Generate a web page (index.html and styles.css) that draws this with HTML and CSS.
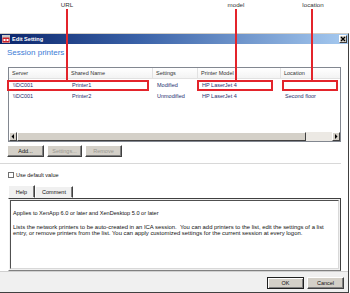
FILE: index.html
```html
<!DOCTYPE html>
<html>
<head>
<meta charset="utf-8">
<link rel="stylesheet" href="styles.css">
</head>
<body>
<div class="page">
  <div class="annot"></div>
  <div class="dialog">
    <div class="titlebar">
      <svg class="appicon" width="8" height="8" viewBox="0 0 8 8"><rect x="0" y="0" width="8" height="8" fill="#c8c8c8"/><rect x="0.5" y="2.5" width="7" height="5" fill="#d0202a"/><rect x="1.5" y="4" width="2" height="2" fill="#fff"/><rect x="4.5" y="4" width="2" height="2" fill="#fff"/></svg>
      <span class="title">Edit Setting</span>
      <span class="closebtn"><svg width="6" height="6" viewBox="0 0 6 6"><path d="M1 1 L5 5 M5 1 L1 5" stroke="#000" stroke-width="1.3"/></svg></span>
    </div>
    <div class="content">
      <div class="heading">Session printers</div>
      <div class="table">
        <div class="row head">
          <div class="cell">Server</div>
          <div class="cell">Shared Name</div>
          <div class="cell">Settings</div>
          <div class="cell">Printer Model</div>
          <div class="cell">Location</div>
        </div>
        <div class="row">
          <div class="cell">\\DC001</div>
          <div class="cell">Printer1</div>
          <div class="cell">Modified</div>
          <div class="cell">HP LaserJet 4</div>
          <div class="cell"></div>
        </div>
        <div class="row">
          <div class="cell">\\DC001</div>
          <div class="cell">Printer2</div>
          <div class="cell">Unmodified</div>
          <div class="cell">HP LaserJet 4</div>
          <div class="cell">Second floor</div>
        </div>
        <div class="filler"></div>
        <div class="hscroll">
          <div class="arrow"><svg width="4" height="5" viewBox="0 0 4 5"><path d="M3 0 L0.5 2.5 L3 5 Z" fill="#000"/></svg></div>
          <div class="thumb"></div>
          <div class="track"></div>
          <div class="arrow"><svg width="4" height="5" viewBox="0 0 4 5"><path d="M1 0 L3.5 2.5 L1 5 Z" fill="#000"/></svg></div>
        </div>
      </div>
      <div class="btnrow">
        <div class="btn">Add...</div>
        <div class="btn disabled">Settings...</div>
        <div class="btn disabled">Remove</div>
      </div>
    </div>
    <div class="sep"></div>
    <div class="lower">
      <div class="checkrow"><span class="checkbox"></span><span>Use default value</span></div>
      <div class="tabs">
        <div class="tab active">Help</div>
        <div class="tab">Comment</div>
      </div>
      <div class="panel">
        <div class="panelbox">
          <p class="applies">Applies to XenApp 6.0 or later and XenDesktop 5.0 or later</p>
          <p class="desc">Lists the network printers to be auto-created in an ICA session.&nbsp; You can add printers to the list, edit the settings of a list<br>entry, or remove printers from the list. You can apply customized settings for the current session at every logon.</p>
        </div>
      </div>
    </div>
    <div class="footer">
      <div class="btn wide default">OK</div>
      <div class="btn wide">Cancel</div>
    </div>
  </div>

  <div class="label l-url">URL</div>
  <div class="label l-model">model</div>
  <div class="label l-loc">location</div>
  <div class="vline v-url"></div>
  <div class="vline v-model"></div>
  <div class="vline v-loc"></div>
  <div class="rbox b-url"></div>
  <div class="rbox b-model"></div>
  <div class="rbox b-loc"></div>
</div>
</body>
</html>
```
FILE: styles.css
```css
* { box-sizing: border-box; }
html, body { margin: 0; padding: 0; background: #fff; }
body { width: 350px; height: 293px; overflow: hidden; font-family: "Liberation Sans", Arial, sans-serif; font-size: 5.5px; color: #111; }
.page { position: relative; width: 350px; height: 293px; }
.annot { height: 33px; }

.dialog { width: 349px; border-top: 1px solid #d4d0c8; border-right: 1px solid #404040; border-bottom: 1px solid #404040; background: #fff; display: flex; flex-direction: column; }

.titlebar { height: 10px; background: linear-gradient(to right, #0a246a 0%, #3a62a8 40%, #a6caf0 100%); display: flex; align-items: center; padding: 0 1px 0 2px; }
.appicon { display: block; margin-right: 2px; }
.title { color: #fff; font-weight: bold; font-size: 5.6px; flex: 1; }
.closebtn { width: 8px; height: 8px; background: #d4d0c8; border: 1px solid; border-color: #fff #404040 #404040 #fff; display: flex; align-items: center; justify-content: center; }
.closebtn svg { display: block; }

.content { padding: 0 7px 0 8px; }
.heading { margin-top: 4px; height: 10px; line-height: 10px; font-size: 8px; color: #3a7bd5; margin-left: -1px; }

.table { margin-top: 9px; width: 333px; height: 75px; border: 1px solid #828790; display: flex; flex-direction: column; background: #fff; }
.row { display: grid; grid-template-columns: 59px 85px 45px 83px 1fr; height: 11px; align-items: center; color: #1e2d6e; }
.row .cell { padding-left: 4px; white-space: nowrap; overflow: hidden; }
.row.head { height: 11px; color: #333; background: linear-gradient(#fff, #f3f3f3); border-bottom: 1px solid #e2e2e2; }
.row.head .cell { height: 100%; display: flex; align-items: center; border-right: 1px solid #e2e2e2; padding-left: 3px; }
.row.head .cell:last-child { border-right: none; }
.filler { flex: 1; }
.hscroll { height: 9px; display: flex; background: #ece9e4; }
.hscroll .arrow { width: 8px; height: 9px; background: #d4d0c8; border: 1px solid; border-color: #fff #404040 #404040 #fff; display: flex; align-items: center; justify-content: center; }
.hscroll .arrow svg { display: block; }
.hscroll .thumb { width: 289px; background: #d4d0c8; border: 1px solid; border-color: #fff #404040 #404040 #fff; }
.hscroll .track { flex: 1; }

.btnrow { display: flex; gap: 3px; margin-top: 3px; height: 12px; margin-left: -1px; }
.btn { height: 12px; width: 37px; background: #d4d0c8; border: 1px solid; border-color: #fff #404040 #404040 #fff; box-shadow: inset -1px -1px 0 #808080; display: flex; align-items: center; justify-content: center; color: #111; }
.btn.disabled { color: #9a9890; }
.btn:nth-child(2) { width: 35px; }

.sep { height: 1px; margin-top: 6px; width: 341px; background: #d8d8d8; }

.lower { padding: 0 7px 0 8px; }
.checkrow { height: 12px; margin-top: 5px; display: flex; align-items: center; gap: 2px; }
.checkbox { width: 6px; height: 6px; border: 1px solid #707070; background: #fff; display: inline-block; }

.tabs { display: flex; margin-top: 4px; height: 13px; align-items: flex-end; }
.tab { height: 12px; padding: 0 8px; display: flex; align-items: center; background: #f0f0f0; border: 1px solid; border-color: #fff #404040 transparent #fff; box-shadow: inset -1px 0 0 #808080; color: #111; }
.tab.active { height: 13px; width: 27px; justify-content: center; padding: 0; }
.tab:nth-child(2) { width: 38px; justify-content: center; padding: 0; }

.panel { width: 333px; height: 73px; border: 1px solid; border-color: #fff #404040 #808080 #fff; background: #f0f0f0; padding: 1px; border-top: 1px solid #404040; }
.panelbox { height: 100%; background: #fff; border: 1px solid; border-color: #505050 #d8d8d8 #d8d8d8 #505050; padding: 9px 2px 0 2px; }
.panelbox p { margin: 0; line-height: 6.6px; white-space: nowrap; }
.applies { margin-bottom: 7px !important; font-size: 5.6px; }
.desc { font-size: 5.9px; }

.footer { height: 21px; background: #f0f0f0; border-top: 1px solid #d0d0d0; display: flex; justify-content: flex-end; align-items: center; gap: 3px; padding-right: 4px; padding-top: 1px; }
.btn.wide { width: 37px; }
.btn.default { border-color: #202020; box-shadow: inset 1px 1px 0 #fff, inset -1px -1px 0 #808080; }

.label { position: absolute; top: 1px; font-size: 6.2px; color: #333; transform: translateX(-50%); }
.l-url { left: 67px; }
.l-model { left: 236px; }
.l-loc { left: 313px; }
.vline { position: absolute; width: 2px; background: #e3242b; top: 9px; height: 71px; }
.v-url { left: 66px; }
.v-model { left: 235px; }
.v-loc { left: 311px; }
.rbox { position: absolute; top: 80px; height: 11px; border: 2px solid #e3242b; }
.b-url { left: 7px; width: 142px; }
.b-model { left: 197px; width: 76px; }
.b-loc { left: 282px; width: 56px; }
```
